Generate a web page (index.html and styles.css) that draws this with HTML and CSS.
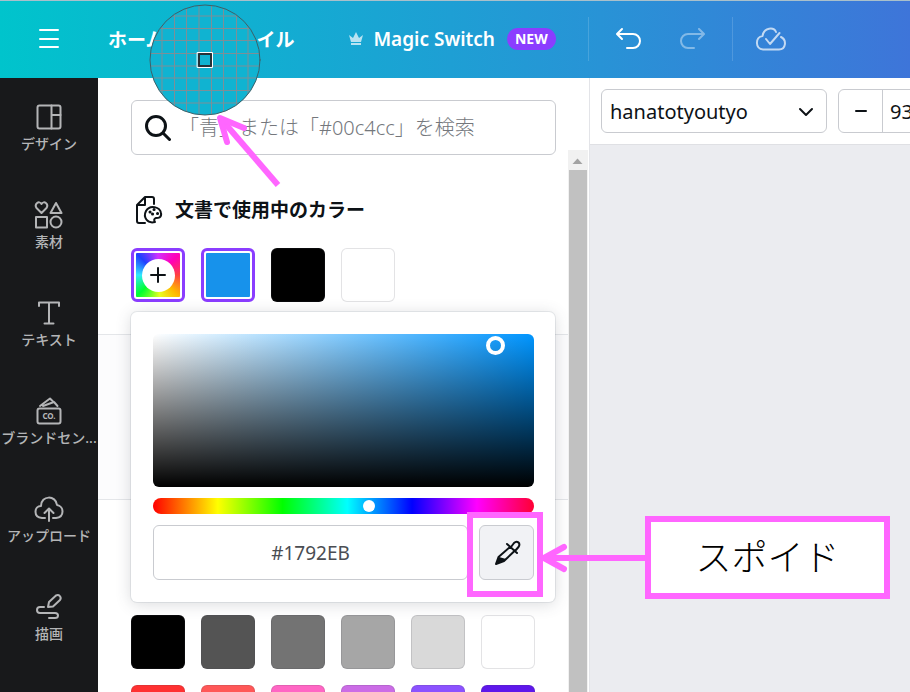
FILE: index.html
```html
<!DOCTYPE html>
<html lang="ja">
<head>
    <meta charset="UTF-8">
    <meta name="viewport" content="width=device-width, initial-scale=1.0">
    <title>カラー</title>
    <link rel="stylesheet" href="styles.css">
</head>
<body>
    <header class="topbar">
        <button class="icon-btn menu-btn" aria-label="メニュー">
            <svg width="22" height="22" viewBox="0 0 22 22"><path d="M2 2H20M2 11H20M2 19H20"/></svg>
        </button>
        <nav class="topnav">
            <a href="#">ホーム</a>
            <a href="#">ファイル</a>
        </nav>
        <a href="#" class="magic">
            <svg class="crown" width="14" height="14" viewBox="0 0 14 14"><path d="M0 3L4 6L7 0L10 6L14 3L12 10H2ZM2 11H12V13H2Z"/></svg>
            <span>Magic Switch</span>
            <span class="badge">NEW</span>
        </a>
        <div class="history">
            <button class="icon-btn" aria-label="元に戻す">
                <svg width="28" height="24" viewBox="0 0 28 24"><path d="M7 2L2 7L7 12M2.500 7H18A7 7 0 0 1 18 21H12"/></svg>
            </button>
            <button class="icon-btn faded" aria-label="やり直す">
                <svg width="28" height="24" viewBox="0 0 28 24"><path d="M21 2L26 7L21 12M25.500 7H10A7 7 0 0 0 10 21H16"/></svg>
            </button>
        </div>
        <button class="icon-btn cloud-btn" aria-label="保存済み">
            <svg width="32" height="26" viewBox="0 0 32 26"><path d="M21 6C19 1 9 1 7.500 10C0 11 0 23 8 23.500H24C31 23.500 32 14 26 11M11 13L15 18L24.500 7"/></svg>
        </button>
    </header>

    <div class="workspace">
        <nav class="sidebar">
            <a href="#">
                <svg width="30" height="30" viewBox="0 0 30 30"><rect x="3.500" y="3.500" width="23" height="23" rx="2"/><path d="M17.500 3.500V26.500M17.500 13H26.500"/></svg>
                <span>デザイン</span>
            </a>
            <a href="#">
                <svg width="30" height="30" viewBox="0 0 30 30"><path d="M7.500 13L2.500 8C0 4 5 0 7.500 4C10 0 15 4 12.500 8ZM22 3L27.500 13H16.500ZM2 17H13V27.500H2Z"/><circle cx="22" cy="22" r="5.500"/></svg>
                <span>素材</span>
            </a>
            <a href="#">
                <svg width="30" height="30" viewBox="0 0 30 30"><path d="M5 8V4.500H25V8M15 4.500V25.500M10.500 25.500H19.500"/></svg>
                <span>テキスト</span>
            </a>
            <a href="#">
                <svg width="30" height="30" viewBox="0 0 30 30"><rect x="3.500" y="12.500" width="23" height="15" rx="2"/><path d="M6 10L16 2.500L19 5.500M9 10L20 6L23.500 10"/><text x="15" y="23">CO.</text></svg>
                <span>ブランドセン...</span>
            </a>
            <a href="#">
                <svg width="30" height="30" viewBox="0 0 30 30"><path d="M11 24H8C-1 23 0 12 7 12C7 1 22 1 23 11C30 12 31 23 22 24H19M15 27V15M10.500 19L15 14.500L19.500 19"/></svg>
                <span>アップロード</span>
            </a>
            <a href="#">
                <svg width="30" height="30" viewBox="0 0 30 30"><path d="M14 15L15 10L22 3.500C25 2 28 5 26 8L19 14.500ZM10 15H6C2 15 2 21 6 21H21C25 21 25 26 21 26H15"/></svg>
                <span>描画</span>
            </a>
        </nav>

        <main class="panel">
            <div class="search">
                <svg width="26" height="26" viewBox="0 0 26 26"><circle cx="11" cy="11" r="9.500"/><path d="M18 18L24.500 24.500"/></svg>
                <input type="text" aria-label="カラーを検索" placeholder="「青」または「#00c4cc」を検索">
            </div>

            <div class="panel-body">
                <section class="doc-colors">
                    <h2>
                        <svg width="28" height="30" viewBox="0 0 28 30"><path d="M19 9V4Q19 2 17 2H10L2 10V26Q2 28 4 28H10M10 2V10H2"/><path d="M20 27C12 29 8 22 11 16C15 9 25 12 26 18C27 23 23 23 21 23Q18 24 20 27Z"/><path class="dots" d="M15 17H15.100M19 14.500H19.100M22.500 18.500H22.600M17.500 19H17.600"/></svg>
                        文書で使用中のカラー
                    </h2>
                    <div class="swatches">
                        <button class="swatch ring rainbow" aria-label="新しいカラーを追加">
                            <span class="plus"><svg width="18" height="18" viewBox="0 0 18 18"><path d="M9 2V16M2 9H16"/></svg></span>
                        </button>
                        <button class="swatch ring blue" aria-label="#1792EB"></button>
                        <button class="swatch black" aria-label="黒"></button>
                        <button class="swatch white" aria-label="白"></button>
                    </div>
                </section>

                <section class="brand-colors"></section>

                <section class="default-colors">
                    <div class="swatches">
                        <button class="swatch black" aria-label="黒"></button>
                        <button class="swatch gray-1" aria-label="ダークグレー"></button>
                        <button class="swatch gray-2" aria-label="グレー"></button>
                        <button class="swatch gray-3" aria-label="ミディアムグレー"></button>
                        <button class="swatch gray-4" aria-label="ライトグレー"></button>
                        <button class="swatch white" aria-label="白"></button>
                        <button class="swatch red" aria-label="赤"></button>
                        <button class="swatch coral" aria-label="コーラルレッド"></button>
                        <button class="swatch pink" aria-label="ピンク"></button>
                        <button class="swatch mauve" aria-label="モーブ"></button>
                        <button class="swatch purple" aria-label="紫"></button>
                        <button class="swatch violet" aria-label="バイオレット"></button>
                    </div>
                </section>
            </div>

            <div class="picker">
                <div class="shade"><span class="shade-handle"></span></div>
                <input class="hue" type="range" min="0" max="360" value="205" aria-label="色相">
                <div class="picker-row">
                    <input class="hex" type="text" value="#1792EB" aria-label="カラーコード">
                    <button class="dropper" aria-label="スポイド">
                        <svg width="28" height="28" viewBox="0 0 28 28"><path d="M14 5L24 14M17 8L5.500 18L3 25L11 22L21.500 12M18 8L21 4C24 1 28 4 25.500 8L22 12"/><path class="ink" d="M6 18L13 20L11 22L3 25Z"/></svg>
                    </button>
                </div>
                <div class="highlight"></div>
            </div>

            <div class="scrollbar">
                <svg width="19" height="20" viewBox="0 0 19 20"><path d="M4.500 14L9.500 8.500L14.500 14Z"/></svg>
                <div class="thumb"></div>
            </div>
        </main>

        <div class="editor">
            <div class="toolbar">
                <div class="font-select">
                    <select aria-label="フォント"><option>hanatotyoutyo</option></select>
                    <svg width="16" height="10" viewBox="0 0 16 10"><path d="M2 2L8 8L14 2"/></svg>
                </div>
                <div class="size-box">
                    <button aria-label="文字を小さく"><svg width="14" height="4" viewBox="0 0 14 4"><path d="M2 2H12"/></svg></button>
                    <input type="text" value="93" aria-label="フォントサイズ">
                </div>
            </div>
            <div class="canvas"></div>
        </div>
    </div>

    <svg class="loupe" width="114" height="114" viewBox="0 0 114 114">
        <defs><clipPath id="lens"><circle cx="57" cy="57" r="55"/></clipPath></defs>
        <circle class="glass" cx="57" cy="57" r="55"/>
        <path class="grid" clip-path="url(#lens)" d="M14 0V114M26.500 0V114M38.500 0V114M51 0V114M63.500 0V114M75.500 0V114M88.500 0V114M100 0V114M0 13H114M0 25.500H114M0 37.500H114M0 50.500H114M0 63H114M0 75H114M0 87.500H114M0 100H114"/>
        <circle class="rim" cx="57" cy="57" r="55"/>
        <rect class="px-out" x="49.500" y="49.500" width="15" height="15"/>
        <rect class="px-in" x="51" y="51" width="12" height="12"/>
    </svg>

    <svg class="arrow arrow-loupe" width="70" height="80" viewBox="0 0 70 80"><path d="M67 74L11 9"/><path class="head" d="M33 17L9 7L16 31"/></svg>

    <div class="callout">
        <svg class="arrow" width="106" height="34" viewBox="0 0 106 34"><path d="M4 17H106"/><path class="head" d="M25 6L5 17L25 28"/></svg>
        <p>スポイド</p>
    </div>
</body>
</html>
```
FILE: styles.css
```css
* {
    box-sizing: border-box;
}
body {
    display: flex;
    flex-direction: column;
    position: relative;
    height: 100vh;
    margin: 0;
    overflow: hidden;
    font-family: "Noto Sans", "Noto Sans CJK JP", sans-serif;
    font-size: 19px;
    color: #0d1216;
}
button, input, select {
    font: inherit;
    color: inherit;
    margin: 0;
    padding: 0;
}
button {
    cursor: pointer;
}
a {
    color: inherit;
    text-decoration: none;
}
svg {
    display: block;
    flex: none;
    fill: none;
    stroke: currentColor;
    stroke-width: 2;
    stroke-linecap: round;
    stroke-linejoin: round;
}

/* top bar */
.topbar {
    display: flex;
    align-items: center;
    flex: 0 0 78px;
    padding-bottom: 2px;
    border-top: 1px solid #a9c0cb;
    background: linear-gradient(to right, #00c4cc, #14abd2 33%, #2893d6 66%, #3e75d9);
    color: white;
}
.icon-btn {
    display: flex;
    border: none;
    background: none;
}
.menu-btn {
    margin: 0 48px 0 38px;
}
.topnav {
    display: flex;
    gap: 54px;
    font-weight: bold;
}
.magic {
    display: flex;
    align-items: center;
    margin-left: 55px;
    font-weight: 600;
}
.crown {
    margin-right: 10px;
    fill: #b9e3f2;
    stroke: none;
}
.badge {
    margin-left: 12px;
    padding: 0 8px;
    border-radius: 11px;
    background: #8b3dff;
    font-size: 14px;
    font-weight: bold;
    line-height: 22px;
}
.history {
    display: flex;
    gap: 35px;
    margin-left: 32px;
    padding: 10px 26px;
    border: solid rgba(255, 255, 255, 0.15);
    border-width: 0 1px;
}
.faded {
    opacity: 0.4;
}
.cloud-btn {
    margin-left: 22px;
    opacity: 0.7;
}

.workspace {
    display: flex;
    flex: 1;
    min-height: 0;
}

/* left menu */
.sidebar {
    flex: 0 0 98px;
    background: #18191b;
    color: #b4b5b7;
    overflow: hidden;
}
.sidebar a {
    display: flex;
    flex-direction: column;
    align-items: center;
    height: 98px;
    padding-top: 24px;
    font-size: 14px;
    font-weight: 500;
    line-height: 24px;
    white-space: nowrap;
}
.sidebar text {
    fill: currentColor;
    stroke: none;
    font-size: 8px;
    font-weight: bold;
    text-anchor: middle;
}

/* color panel */
.panel {
    display: flex;
    flex-direction: column;
    position: relative;
    flex: 0 0 491px;
    border-right: 1px solid #e3e4e8;
    background: white;
}
.search {
    display: flex;
    align-items: center;
    gap: 8px;
    height: 55px;
    margin: 22px 33px 0;
    padding: 0 13px;
    border: 1px solid #c9cbd0;
    border-radius: 6px;
}
.search svg {
    stroke-width: 3;
}
.search input {
    flex: 1;
    min-width: 0;
    border: none;
    outline: none;
    background: none;
    font-size: 20px;
    font-weight: 300;
}
.search input::placeholder {
    color: #74777c;
    opacity: 1;
}
.panel-body {
    flex: 1;
    min-height: 0;
    margin-right: 21px;
    overflow: hidden;
}
.panel-body section {
    padding: 0 33px;
}
.doc-colors {
    height: 180px;
    border-bottom: 1px solid #e4e6e9;
}
.doc-colors h2 {
    display: flex;
    align-items: center;
    gap: 12px;
    margin: 0 0 23px;
    padding: 40px 0 0 4px;
    font-size: 19px;
    font-weight: bold;
    line-height: 30px;
}
.doc-colors h2 .dots {
    stroke-width: 3;
}
.brand-colors {
    height: 165px;
    border-bottom: 1px solid #e4e6e9;
    background: #fcfcfd;
}
.default-colors .swatches {
    padding-top: 115px;
}
.swatches {
    display: grid;
    grid-template-columns: repeat(6, 54px);
    gap: 16px;
}
.swatch {
    display: flex;
    align-items: center;
    justify-content: center;
    height: 54px;
    border: 1px solid rgba(64, 70, 79, 0.15);
    border-radius: 6px;
}
.ring {
    padding: 2px;
    border: 3px solid #8b3dff;
    background-clip: content-box;
}
.blue {
    background-color: #1792eb;
}
.rainbow {
    background-image: conic-gradient(from 45deg, #ff00b8, #ff4040 45deg, #ffb800 90deg, #e8ff20 130deg, #00ff30 180deg, #30e8ff 225deg, #2040ff 270deg, #d030ff 315deg, #ff00b8);
}
.plus {
    display: flex;
    align-items: center;
    justify-content: center;
    width: 33px;
    height: 33px;
    border-radius: 50%;
    background: white;
}
.black { background-color: #000; }
.white { background-color: #fff; }
.gray-1 { background-color: #545454; }
.gray-2 { background-color: #737373; }
.gray-3 { background-color: #a6a6a6; }
.gray-4 { background-color: #d9d9d9; }
.red { background-color: #ff3131; }
.coral { background-color: #ff5757; }
.pink { background-color: #ff66c4; }
.mauve { background-color: #cb6ce6; }
.purple { background-color: #8c52ff; }
.violet { background-color: #5e17eb; }

/* color picker popover */
.picker {
    display: flex;
    flex-direction: column;
    gap: 11px;
    position: absolute;
    top: 234px;
    left: 33px;
    width: 424px;
    padding: 22px 21px 22px 22px;
    border-radius: 6px;
    background: white;
    box-shadow: 0 0 0 1px rgba(64, 87, 109, 0.1), 0 2px 16px rgba(64, 70, 79, 0.2);
}
.shade {
    position: relative;
    height: 153px;
    border-radius: 6px;
    background: linear-gradient(to top, #000, transparent), linear-gradient(to right, #fff, #0095ff);
}
.shade-handle {
    position: absolute;
    top: 2px;
    left: 333px;
    width: 19px;
    height: 19px;
    border: 4px solid white;
    border-radius: 50%;
}
.hue {
    appearance: none;
    width: 100%;
    height: 16px;
    border-radius: 8px;
    background: linear-gradient(to right, #f00, #ff0 17%, #0f0 34%, #0ff 51%, #00f 68%, #f0f 85%, #f03);
}
.hue::-webkit-slider-thumb {
    appearance: none;
    width: 12px;
    height: 12px;
    border-radius: 50%;
    background: white;
}
.picker-row {
    display: flex;
    gap: 11px;
}
.hex {
    flex: 1;
    min-width: 0;
    height: 55px;
    border: 1px solid #c9cbd0;
    border-radius: 6px;
    color: #4a4d52;
    text-align: center;
}
.dropper {
    display: flex;
    align-items: center;
    justify-content: center;
    width: 55px;
    height: 55px;
    border: 1px solid #c9cbd0;
    border-radius: 6px;
    background: #f1f2f5;
}
.dropper .ink {
    fill: currentColor;
    stroke: none;
}
.highlight {
    position: absolute;
    right: 12px;
    bottom: 5px;
    width: 76px;
    height: 85px;
    border: 6px solid #ff66ff;
    pointer-events: none;
}

.scrollbar {
    display: flex;
    flex-direction: column;
    position: absolute;
    top: 72px;
    right: 1px;
    bottom: 0;
    width: 20px;
    background: #f1f1f1;
}
.scrollbar svg {
    fill: #a3a3a3;
    stroke: none;
}
.thumb {
    flex: 1;
    margin: 0 1px;
    background: #c1c1c1;
}

/* editor */
.editor {
    display: flex;
    flex-direction: column;
    flex: 1;
    min-width: 0;
}
.toolbar {
    display: flex;
    gap: 11px;
    padding: 11px 0 11px 11px;
    border-bottom: 1px solid #dfe0e4;
    overflow: hidden;
}
.font-select {
    position: relative;
    flex: 0 0 226px;
}
.font-select select {
    appearance: none;
    width: 100%;
    height: 44px;
    padding: 0 8px;
    border: 1px solid #c9cbd0;
    border-radius: 6px;
    background: white;
    font-size: 20px;
}
.font-select svg {
    position: absolute;
    top: 18px;
    right: 13px;
    pointer-events: none;
}
.size-box {
    display: flex;
    flex: 0 0 130px;
    height: 44px;
    border: 1px solid #c9cbd0;
    border-radius: 6px;
}
.size-box button {
    display: flex;
    align-items: center;
    justify-content: center;
    width: 44px;
    border: none;
    border-right: 1px solid #c9cbd0;
    background: none;
}
.size-box input {
    width: 60px;
    border: none;
    padding-left: 7px;
    background: none;
    font-size: 20px;
}
.canvas {
    flex: 1;
    background: #ebecf0;
}

/* eyedropper loupe and notes */
.loupe {
    position: absolute;
    top: 3px;
    left: 148px;
}
.loupe .glass {
    fill: #10b3d1;
    stroke: none;
}
.loupe .grid {
    stroke: #7d8f97;
    stroke-width: 1;
}
.loupe .rim {
    stroke: #3d6069;
    stroke-width: 1;
}
.loupe .px-out {
    stroke: white;
    stroke-width: 1;
}
.loupe .px-in {
    stroke: #263238;
    stroke-width: 2;
}
.arrow {
    stroke: #ff66ff;
    stroke-width: 6;
    stroke-linecap: butt;
}
.arrow .head {
    stroke-linecap: round;
}
.arrow-loupe {
    position: absolute;
    top: 111px;
    left: 211px;
}
.callout {
    display: flex;
    align-items: center;
    position: absolute;
    top: 516px;
    left: 539px;
}
.callout p {
    width: 245px;
    height: 83px;
    margin: 0;
    border: 6px solid #ff66ff;
    background: white;
    color: black;
    font-family: "Noto Sans CJK JP", sans-serif;
    font-size: 36px;
    font-weight: 300;
    line-height: 66px;
    text-align: center;
}
```
